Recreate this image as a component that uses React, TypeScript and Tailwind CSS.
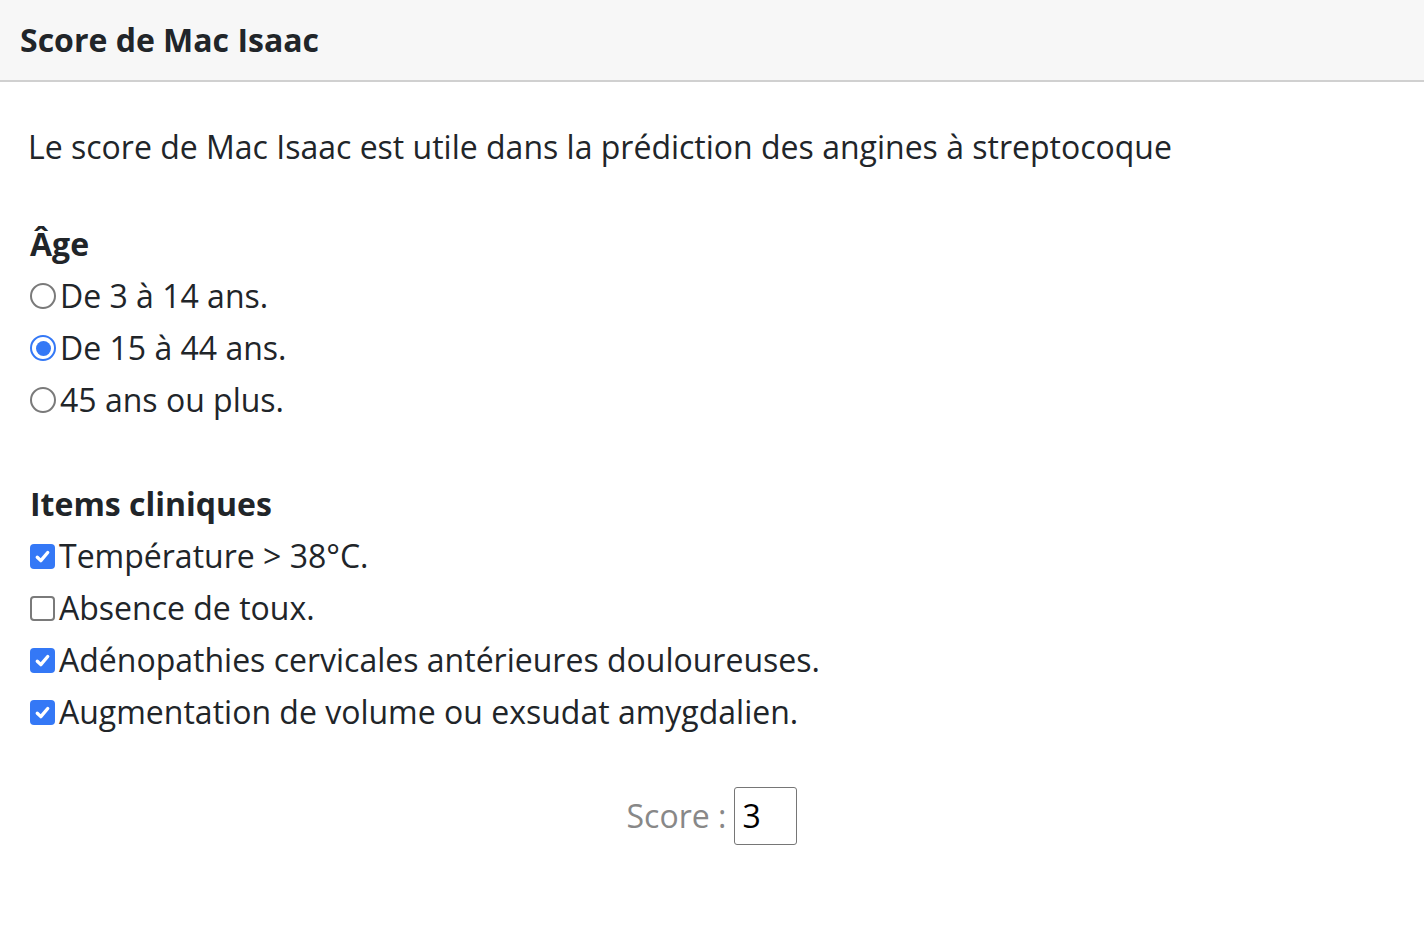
import React, { useState } from "react";

// Score de Mac Isaac calculator

const ageOptions = [
	{ label: "De 3 à 14 ans.", points: 1 },
	{ label: "De 15 à 44 ans.", points: 0 },
	{ label: "45 ans ou plus.", points: -1 },
];

const clinicalItems = ["Température > 38°C.", "Absence de toux.", "Adénopathies cervicales antérieures douloureuses.", "Augmentation de volume ou exsudat amygdalien."];

function Radio({ checked }: { checked: boolean }) {
	return checked ? (
		<span className="flex h-[26px] w-[26px] shrink-0 items-center justify-center rounded-full border-[2px] border-[#3478f6] bg-white">
			<span className="h-[15px] w-[15px] rounded-full bg-[#3478f6]" />
		</span>
	) : (
		<span className="h-[26px] w-[26px] shrink-0 rounded-full border-[2px] border-[#7a7a7a] bg-white" />
	);
}

function Checkbox({ checked }: { checked: boolean }) {
	return checked ? (
		<span className="flex h-[25px] w-[25px] shrink-0 items-center justify-center rounded-[4px] bg-[#3478f6]">
			<svg viewBox="0 0 16 16" className="h-[19px] w-[19px]">
				<path d="M3.6 8.6 L6.6 11.5 L12.4 4.6" fill="none" stroke="white" strokeWidth="2.8" strokeLinecap="round" strokeLinejoin="round" />
			</svg>
		</span>
	) : (
		<span className="h-[25px] w-[25px] shrink-0 rounded-[4px] border-[2px] border-[#7a7a7a] bg-white" />
	);
}

export default function App() {
	const [age, setAge] = useState(1);
	const [items, setItems] = useState([true, false, true, true]);
	const score = ageOptions[age].points + items.filter(Boolean).length;

	return (
		<div className="min-h-[952px] bg-white text-[#212529]" style={{ fontFamily: '"Open Sans", sans-serif' }}>
			<div className="flex h-[82px] items-center border-b-2 border-[#d0d0d0] bg-[#f7f7f7] px-[20px]">
				<h1 className="text-[32px] font-bold text-[#212529]">Score de Mac Isaac</h1>
			</div>

			<div className="px-[30px]">
				<p className="-ml-[2px] mt-[39px] text-[32px] leading-[52px]">Le score de Mac Isaac est utile dans la prédiction des angines à streptocoque</p>

				<h2 className="mt-[45px] text-[32px] font-bold leading-[52px]">Âge</h2>
				{ageOptions.map((opt, i) => (
					<label key={opt.label} className="flex h-[52px] cursor-pointer items-center text-[32px]" onClick={() => setAge(i)}>
						<Radio checked={age === i} />
						<span className="ml-[4px]">{opt.label}</span>
					</label>
				))}

				<h2 className="mt-[52px] text-[32px] font-bold leading-[52px]">Items cliniques</h2>
				{clinicalItems.map((label, i) => (
					<label
						key={label}
						className="flex h-[52px] cursor-pointer items-center text-[32px]"
						onClick={() => setItems(items.map((v, j) => (j === i ? !v : v)))}
					>
						<Checkbox checked={items[i]} />
						<span className="ml-[4px]">{label}</span>
					</label>
				))}

				<div className="mt-[49px] flex items-center justify-center">
					<span className="text-[32px] text-[#888888]">Score :</span>
					<div className="ml-[8px] flex h-[58px] w-[63px] items-center rounded-[3px] border-[1.5px] border-[#767676] px-[7px] text-[32px] text-black">{score}</div>
				</div>
			</div>
		</div>
	);
}
